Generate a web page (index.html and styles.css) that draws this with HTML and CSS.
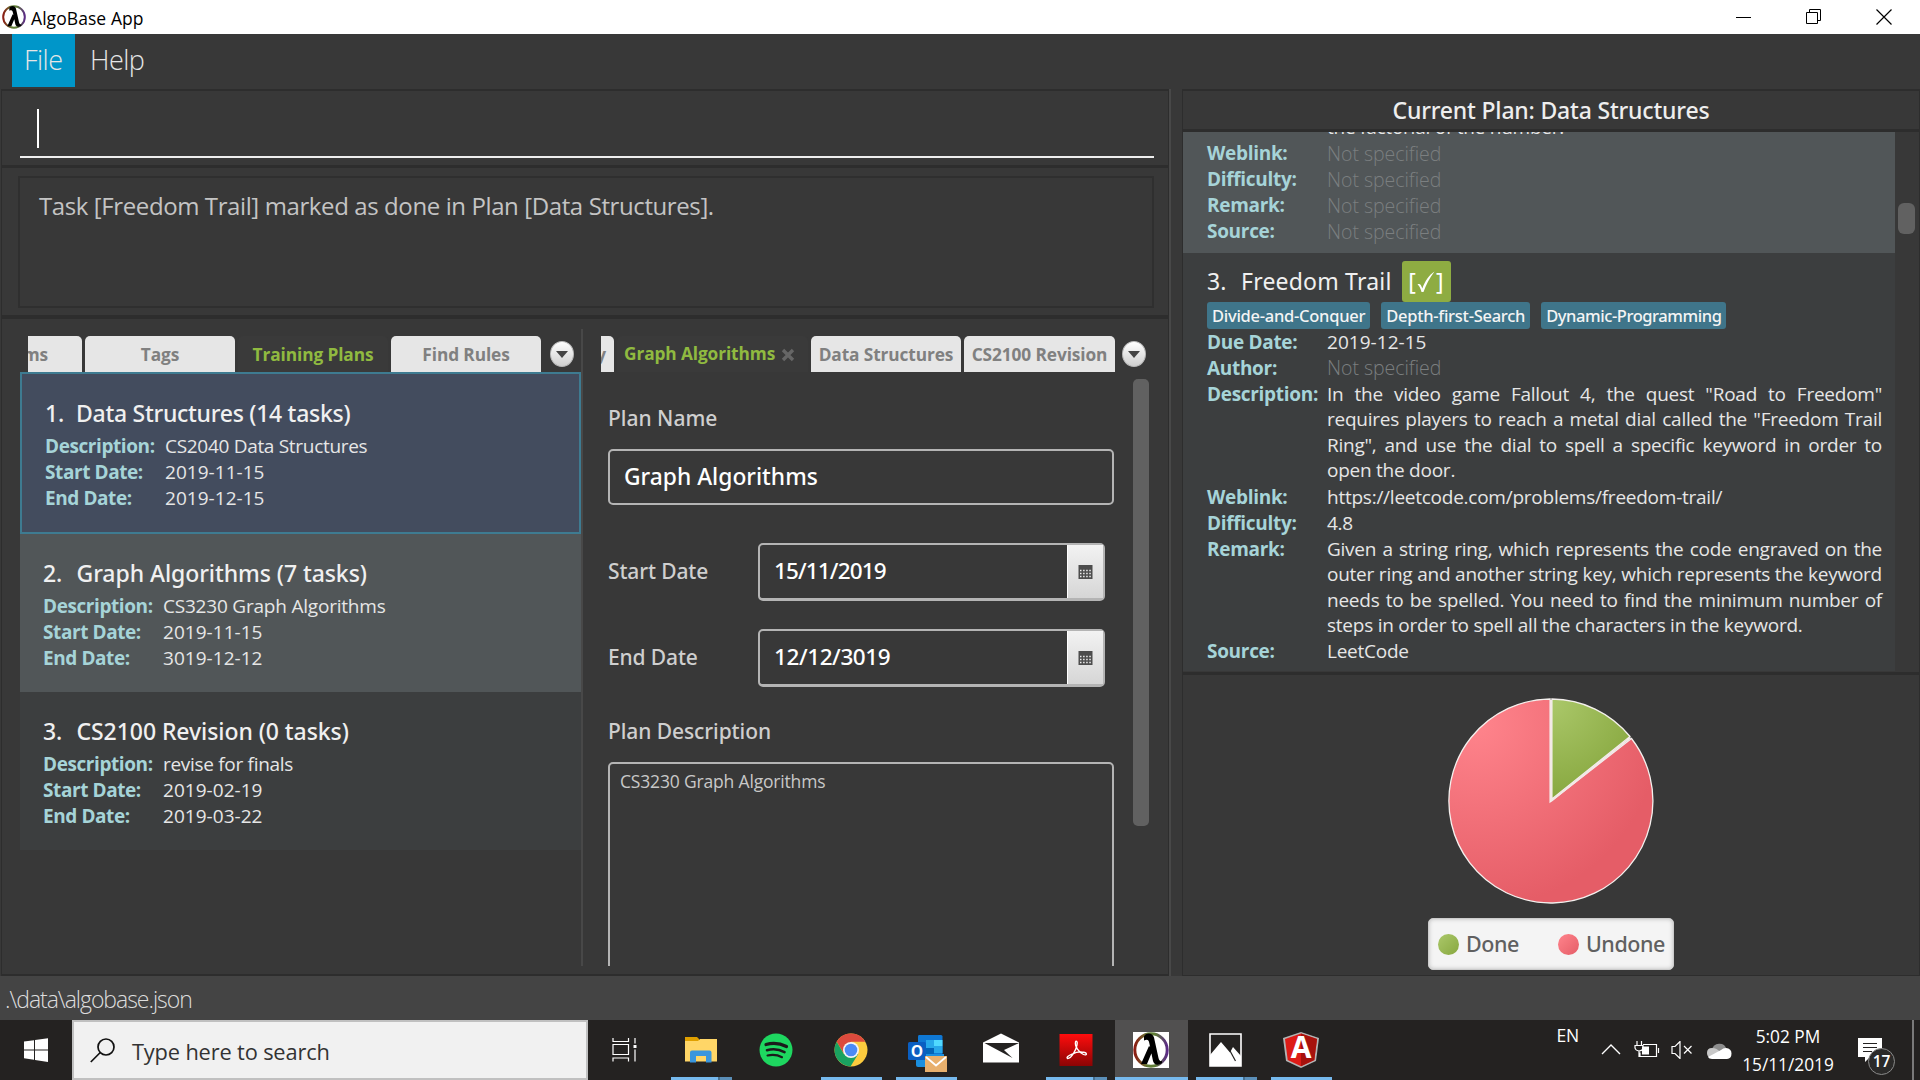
FILE: index.html
```
<!DOCTYPE html>
<html lang="en">
<head>
<meta charset="utf-8">
<title>AlgoBase App</title>
<link rel="stylesheet" href="styles.css">
</head>
<body>
<svg width="0" height="0" class="defs">
  <defs>
    <linearGradient id="ring" x1="0" y1="0" x2="1" y2="0">
      <stop offset="0" stop-color="#8c1c13"/><stop offset=".4" stop-color="#5f7d35"/>
      <stop offset=".62" stop-color="#5f7d35"/><stop offset="1" stop-color="#5b2a86"/>
    </linearGradient>
    <symbol id="lambda" viewBox="0 0 36 36">
      <circle cx="18" cy="18" r="16.200" fill="none" stroke="url(#ring)" stroke-width="3"/>
      <path d="M11 4.500c1.500-4 8.500-4.400 10 1l4.500 20.500c.8 2.600 1.500 3.500 3.500 3v2c-4 2.800-8 1.900-9-2L16.500 12c-.8-3.800-1.500-5-5.500-3.500zM16 14l4 3.500L14 32H8z" fill="#000"/>
    </symbol>
    <symbol id="calendar" viewBox="0 0 15 16">
      <path d="M.5 1h14v14H.5z" fill="#4d4d4d"/>
      <path d="M2 6.500h11M2 9.500h11M2 12.500h11" stroke="#eee" stroke-width="1.500" stroke-dasharray="1.500 1.600"/>
    </symbol>
  </defs>
</svg>

<header class="titlebar">
  <svg class="app-icon" width="24" height="24"><use href="#lambda"/></svg>
  <span class="app-name">AlgoBase App</span>
  <div class="window-buttons">
    <svg width="16" height="16"><path d="M0 8.500h15" stroke="#000"/></svg>
    <svg width="16" height="16" fill="none" stroke="#000"><path d="M.5 3.500h11v11H.5zM3.500 3.500v-3h11v11h-3"/></svg>
    <svg width="16" height="16"><path d="M.5 .5l15 15M15.500 .5l-15 15" stroke="#000" stroke-width="1.200"/></svg>
  </div>
</header>

<nav class="menubar">
  <span class="menu active">File</span>
  <span class="menu">Help</span>
</nav>

<main class="workspace">
  <section class="left-side">
    <div class="pane command-pane"><div class="command"><i class="caret"></i></div></div>
    <div class="pane result-pane"><div class="result">Task [Freedom Trail] marked as done in Plan [Data Structures].</div></div>
    <div class="pane split">
      <div class="list-side">
        <div class="tabs">
          <span class="tab clipped"><b>ms</b></span>
          <span class="tab">Tags</span>
          <span class="tab current">Training Plans</span>
          <span class="tab">Find Rules</span>
          <span class="more"><i></i></span>
        </div>
        <article class="plan selected">
          <h2><span>1.</span>Data Structures (14 tasks)</h2>
          <dl><dt>Description:</dt><dd>CS2040 Data Structures</dd><dt>Start Date:</dt><dd class="date">2019-11-15</dd><dt>End Date:</dt><dd class="date">2019-12-15</dd></dl>
        </article>
        <article class="plan even">
          <h2><span>2.</span>Graph Algorithms (7 tasks)</h2>
          <dl><dt>Description:</dt><dd class="wide">CS3230 Graph Algorithms</dd><dt>Start Date:</dt><dd class="date">2019-11-15</dd><dt>End Date:</dt><dd class="date">3019-12-12</dd></dl>
        </article>
        <article class="plan">
          <h2><span>3.</span>CS2100 Revision (0 tasks)</h2>
          <dl><dt>Description:</dt><dd>revise for finals</dd><dt>Start Date:</dt><dd class="date">2019-02-19</dd><dt>End Date:</dt><dd class="date">2019-03-22</dd></dl>
        </article>
      </div>
      <div class="detail-side">
        <div class="tabs">
          <span class="tab clipped narrow"><b>y</b></span>
          <span class="tab current closable">Graph Algorithms<svg width="14" height="14"><path d="M2 2l10 10M12 2L2 12" stroke="#666" stroke-width="3.400"/></svg></span>
          <span class="tab">Data Structures</span>
          <span class="tab last">CS2100 Revision</span>
          <span class="more"><i></i></span>
        </div>
        <div class="form-scroll">
          <form class="form">
            <label class="name-label">Plan Name</label>
            <div class="field">Graph Algorithms</div>
            <div class="date-row start"><label>Start Date</label><div class="picker"><span>15/11/2019</span><i><svg width="15" height="16"><use href="#calendar"/></svg></i></div></div>
            <div class="date-row"><label>End Date</label><div class="picker"><span class="end">12/12/3019</span><i><svg width="15" height="16"><use href="#calendar"/></svg></i></div></div>
            <label class="desc-label">Plan Description</label>
            <div class="area">CS3230 Graph Algorithms</div>
          </form>
          <i class="thumb"></i>
        </div>
      </div>
    </div>
  </section>

  <section class="right-side">
    <h1 class="pane plan-header">Current Plan: Data Structures</h1>
    <div class="pane task-pane">
      <div class="tasks">
        <article class="task previous">
          <dl><dt></dt><dd>the factorial of the number.</dd><dt>Weblink:</dt><dd class="none">Not specified</dd><dt>Difficulty:</dt><dd class="none">Not specified</dd><dt>Remark:</dt><dd class="none">Not specified</dd><dt>Source:</dt><dd class="none">Not specified</dd></dl>
        </article>
        <article class="task">
          <h2><span>3.</span>Freedom Trail<em>[<svg width="20" height="24"><path d="M1.500 14.500C4 13 5.200 15 6.300 18.500 9 11 13 5 18.500 1.500 13.500 8 10 15 7.500 22H5.500C4.500 18.500 3.500 16 1.500 14.500z" fill="#fff"/></svg>]</em></h2>
          <div class="tags"><span>Divide-and-Conquer</span><span>Depth-first-Search</span><span>Dynamic-Programming</span></div>
          <dl><dt>Due Date:</dt><dd class="date">2019-12-15</dd><dt>Author:</dt><dd class="none">Not specified</dd><dt>Description:</dt><dd class="para"><span>In the video game Fallout 4, the quest "Road to Freedom"</span><span>requires players to reach a metal dial called the "Freedom Trail</span><span>Ring", and use the dial to spell a specific keyword in order to</span><span>open the door.</span></dd><dt>Weblink:</dt><dd>https://leetcode.com/problems/freedom-trail/</dd><dt>Difficulty:</dt><dd>4.8</dd><dt>Remark:</dt><dd class="para"><span>Given a string ring, which represents the code engraved on the</span><span>outer ring and another string key, which represents the keyword</span><span>needs to be spelled. You need to find the minimum number of</span><span>steps in order to spell all the characters in the keyword.</span></dd><dt>Source:</dt><dd>LeetCode</dd></dl>
        </article>
      </div>
      <div class="track"><i></i></div>
    </div>
    <div class="pane chart-pane">
      <svg width="208" height="208" viewBox="-104 -104 208 208">
        <defs>
          <radialGradient id="red" gradientUnits="userSpaceOnUse" cx="-75" cy="-78" r="185"><stop offset="0" stop-color="#ff848c"/><stop offset="1" stop-color="#e55d67"/></radialGradient>
          <radialGradient id="green" gradientUnits="userSpaceOnUse" cx="0" cy="-100" r="98"><stop offset="0" stop-color="#abc86a"/><stop offset="1" stop-color="#88a840"/></radialGradient>
        </defs>
        <g stroke="#f4f0ee" stroke-width="1.300">
          <path d="M-.9 1V-102A102 102 0 1 0 80.500 -62.500z" fill="url(#red)"/>
          <path d="M.9 -2V-102A102 102 0 0 1 79 -64.500z" fill="url(#green)"/>
        </g>
        <path d="M0 0V-101M0 0L79.500 -63.500" stroke="#f3e9e7" stroke-width="2"/>
      </svg>
      <div class="legend"><span><i class="done"></i>Done</span><span><i class="undone"></i>Undone</span></div>
    </div>
  </section>
</main>

<div class="statusbar">.\data\algobase.json</div>

<footer class="taskbar">
  <div class="start-button"><svg width="24" height="24"><path d="M0 3.600l10-1.400v9.200H0zM11 2l13-1.800v11.200H11zM0 12.500h10v9.200L0 20.300zM11 12.500h13V24l-13-1.900z" fill="#fff"/></svg></div>
  <div class="search"><svg width="25" height="25" fill="none" stroke="#111" stroke-width="1.700"><circle cx="16" cy="9" r="8"/><path d="M10.300 14.500L.8 24"/></svg><span>Type here to search</span></div>
  <div class="apps">
    <div class="app view"><svg width="26" height="24" fill="none" stroke="#fff" stroke-width="1.200"><path d="M1 0v3.500h15.500V0M1 6.500h15.500v10H1zM1 23.500V20h15.500v3.500M23 0v5.500M23 11.500v12"/><path d="M21.500 7h3v3h-3z" fill="#fff" stroke="none"/></svg></div>
    <div class="app running multi"><svg width="32" height="32"><path d="M0 3h12l2 2v6H0z" fill="#e0a000"/><path d="M0 7h13l2-2h17v22.500H0z" fill="#ffd667"/><path d="M5 28.500V18.500q0-2 2-2h17.500q2 0 2 2v10h-5.500v-6.500h-10v6.500z" fill="#3a96dd"/></svg></div>
    <div class="app"><svg width="34" height="34"><circle cx="17" cy="17" r="16.500" fill="#1ed760"/><g fill="none" stroke="#1b1b1b" stroke-linecap="round"><path d="M7 11.500c7-2 14-1.300 20.500 2" stroke-width="3.200"/><path d="M8 17.200c6-1.600 12-1 17.500 1.900" stroke-width="2.600"/><path d="M8.500 22.500c5-1.200 10-.7 14.500 1.700" stroke-width="2.100"/></g></svg></div>
    <div class="app running"><svg width="34" height="34"><circle cx="17" cy="17" r="16.500" fill="#fccb3e"/><path d="M2.700 8.750A16.500 16.500 0 0 1 31.300 8.750H17L9.500 20z" fill="#dc4a3d"/><path d="M2.700 8.750A16.500 16.500 0 0 0 16.500 33.500L24.200 21 9.900 21.100z" fill="#1aa260"/><circle cx="17" cy="17" r="8" fill="#f4f4f4"/><circle cx="17" cy="17" r="6.300" fill="#4b8af5"/></svg></div>
    <div class="app running outlook"><svg width="40" height="38"><path d="M11 1h22q1.500 0 1.500 1.500V25H10V2.500Q10 1 11 1z" fill="#0f78d4"/><path d="M18 6h8v8h-8z" fill="#28a8ea"/><path d="M26 6h8.500v6H26z" fill="#50d9ff"/><path d="M18 14h8v6h-8z" fill="#0364b8"/><path d="M26 12h8.500v7H26z" fill="#28a8ea"/><path d="M8 20h28v10q0 3-3 3H10q-2 0-2-2z" fill="#1a8fdf"/><rect y="8" width="18" height="18" rx="1.500" fill="#0a5fc2"/><text x="9" y="22.500" text-anchor="middle" class="logo-letter" font-size="15.500" fill="#fff">O</text><path d="M17 22h22v16H17z" fill="#e8b06d"/><path d="M18 23l10 8.500L38 23" fill="none" stroke="#fff" stroke-width="1.800"/></svg></div>
    <div class="app mail"><svg width="36" height="30"><path d="M0 9.500L18 .5l18 9v20H0z" fill="#fff"/><path d="M1.500 10H36L21 17l8.500 8z" fill="#242221"/></svg></div>
    <div class="app running multi"><svg width="34" height="34"><defs><linearGradient id="pdf" x2="0" y2="1"><stop stop-color="#ff0d0d"/><stop offset="1" stop-color="#8a0404"/></linearGradient></defs><path d="M.5 1h33v32H.5z" fill="url(#pdf)"/><path d="M8.500 25.500c-3-2 9-7 14-6.500 7 .5 5.500 4 2 2.500-4.500-2-9-8-8-12.500.5-2 2.500-.5 1.500 3-1 5-5.500 13.500-9.500 13.500z" fill="none" stroke="#fff" stroke-width="1.300"/></svg></div>
    <div class="app running focused"><svg width="36" height="36"><path d="M0 0h36v36H0z" fill="#fff"/><use href="#lambda"/></svg></div>
    <div class="app running multi"><svg width="33" height="34"><path d="M1 1h31v32H1z" fill="none" stroke="#fff" stroke-width="1.600"/><path d="M1 22L12 9l9 10.500 3-5.500 8 9v10H1z" fill="#fff"/><path d="M20 16l6.500 12" stroke="#242221" stroke-width="1.200"/></svg></div>
    <div class="app running"><svg width="36" height="36"><path d="M18 0l18 6-3 23-15 7-15-7L0 6z" fill="#b3b3b3"/><path d="M18 1.500L34 7l-2.700 21L18 34.300 4.700 28 2 7z" fill="#dd1b16"/><path d="M18 1.500L34 7l-2.700 21L18 34.300z" fill="#a6120d"/><text x="18" y="26" text-anchor="middle" class="logo-letter" font-size="30" fill="#fff">A</text></svg></div>
  </div>
  <div class="tray">
    <span class="lang">EN</span>
    <svg class="chevron" width="20" height="12"><path d="M1 11l9-9 9 9" fill="none" stroke="#fff" stroke-width="1.400"/></svg>
    <svg class="battery" width="26" height="18" fill="none" stroke="#fff" stroke-width="1.200"><path d="M9 3.500h13.500v12H6v-4M24.500 7v5M3 0v4M7.500 0v4M1 4.500h8v2.500q0 2.500-4 3-3.500-.5-4-3zM5 10v6"/><path d="M8 5.500h7v8H8z" fill="#fff" stroke="none"/></svg>
    <svg class="volume" width="22" height="18" fill="none" stroke="#fff" stroke-width="1.200"><path d="M1 5.500h3l5-5v17l-5-5H1zM13 5l7.500 7.500M20.500 5L13 12.500"/></svg>
    <svg class="cloud" width="26" height="18"><path d="M5 8a7.500 7.500 0 0 1 14.500-1l-6 6z" fill="#8d8d8d"/><path d="M5 6q5 0 8 4l-8 6Q0 16 0 11t5-5z" fill="#c8c8c8"/><path d="M19 6q5.500.5 5.500 5.500t-4.500 5.500H5q-3 0-4-2l13-7q2-2 5-2z" fill="#fff"/></svg>
    <div class="clock"><span>5:02 PM</span><span>15/11/2019</span></div>
    <div class="notify"><svg width="24" height="24"><path d="M0 0h24v19H12l-5 5v-5H0z" fill="#fff"/><path d="M5 5.500h14M5 9.500h14M5 13.500h9" stroke="#242221" stroke-width="1.200"/></svg><b>17</b></div>
    <i class="show-desktop"></i>
  </div>
</footer>
</body>
</html>
```
FILE: styles.css
```
* { box-sizing: border-box; }
body {
  margin: 0; width: 1920px; height: 1080px; overflow: hidden;
  display: flex; flex-direction: column;
  background: #383838; color: #e6e6e6;
  font-family: "Open Sans", "Noto Sans", sans-serif;
}
.defs { position: absolute; }
svg { display: block; flex: none; }
h1, h2, dl, dd { margin: 0; }
i { display: block; }

/* window chrome */
.titlebar { height: 34px; display: flex; align-items: center; background: #fff; color: #000; padding-left: 2px; }
.app-name { margin-left: 5px; font-size: 17.500px; line-height: 24px; padding-top: 1px; letter-spacing: .004em; }
.window-buttons { margin: 0 28px 0 auto; display: flex; gap: 54px; }
.menubar { height: 55px; display: flex; padding-left: 12px; }
.menu { height: 53px; line-height: 52px; padding: 0 15px; font-size: 27px; font-weight: 300; letter-spacing: -.02em; }
.menu.active { width: 63px; padding: 0 12px; background: #0096c9; }

/* split workspace */
.workspace { height: 887px; display: flex; padding-left: 1px; }
.left-side { width: 1170px; display: flex; flex-direction: column; border-right: 2px solid #484848; }
.right-side { width: 738px; margin-left: 11px; display: flex; flex-direction: column; }
.pane { border: 2px solid #2d2d2d; border-left-width: 1px; border-right-width: 1px; }
.command-pane { height: 77px; border-bottom-width: 1px; padding: 0 14px 0 18px; }
.command { height: 67px; border-bottom: 2px solid #eee; padding: 18px 0 0 17px; }
.caret { width: 1.500px; height: 39px; background: #fff; }
.result-pane { height: 151px; padding: 8px 14px 6px 16px; }
.result { height: 132px; border: 2px solid #2f2f2f; padding: 10px 19px; line-height: 36px; font-size: 24px; letter-spacing: -.0165em; color: #c4c4c4; }
.split { flex: 1; display: flex; padding: 10px 0 8px 18px; border-bottom-width: 2px; }

/* tabs */
.list-side { width: 563px; border-right: 2px solid #484848; }
.tabs { height: 43px; padding: 7px 0 0 8px; display: flex; gap: 3px; }
.tab {
  width: 150px; height: 36px; border-radius: 5px 5px 0 0; background: #e6e6e6; color: #808080;
  font-size: 17.300px; font-weight: 700; line-height: 38px; text-align: center; white-space: nowrap; letter-spacing: -.006em;
}
.tab.current { background: #3a3a3a; color: #90ba40; }
.tab.clipped { width: 54px; border-radius: 0 5px 0 0; overflow: hidden; display: flex; justify-content: flex-end; padding-right: 34px; }
.tab.clipped b { font-weight: 700; }
.more {
  width: 24px; height: 26px; margin: 5px 0 0 6px; border-radius: 50%;
  background: linear-gradient(#fff, #cfcfcf); border: 1px solid #bbb; display: flex; align-items: center; justify-content: center;
}
.more i { border: 6px solid transparent; border-top: 7px solid #444; border-bottom: 0; }

/* plan list */
.plan { height: 158px; padding: 23px 0 0 23px; background: #3c3e3f; }
.plan.even { background: #515658; }
.plan.selected { height: 162px; border: 2px solid #3e7b91; background: #434c5e; }
.plan h2 { line-height: 32px; margin-bottom: 4px; display: flex; font: 500 23px/32px "Noto Sans", sans-serif; letter-spacing: -.003em; color: #f0f0f0; }
.plan h2 span { width: 33.500px; }
.plan.selected h2 { letter-spacing: -.012em; }
.plan.selected h2 span { width: 31px; }
dl { display: grid; grid-template-columns: 120px 1fr; grid-auto-rows: minmax(26px, auto); line-height: 26px; font-size: 19px; letter-spacing: -.016em; }
dt { font-weight: 700; color: #a6d4d8; letter-spacing: -.022em; white-space: nowrap; }
.date { letter-spacing: .002em; }
.wide { letter-spacing: -.011em; }
.none { font-weight: 300; color: #7b7f80; font-size: 19.500px; letter-spacing: -.002em; }

/* plan form */
.detail-side { flex: 1; padding-left: 11px; }
.detail-side .tabs { padding-left: 7px; }
.tab.narrow { width: 13px; padding-right: 8px; }
.tab.closable { width: 191px; display: flex; align-items: center; gap: 6px; padding-left: 7px; }
.tab.closable svg { margin-top: 2px; }
.tab.last { width: 151px; }
.detail-side .more { margin-left: 4px; }
.form-scroll { height: 594px; display: flex; overflow: hidden; font-family: "Noto Sans", sans-serif; }
.form { width: 506px; margin-left: 14px; font-weight: 500; color: #cfcfcf; }
.form label { display: block; font-size: 21px; line-height: 30px; }
.name-label { margin-top: 31px; }
.field { margin-top: 16px; height: 56px; border: 2px solid #b4b4b4; border-radius: 5px; padding-left: 14px; line-height: 52px; font-size: 22.800px; color: #fff; }
.date-row { height: 86px; display: flex; align-items: flex-start; }
.date-row.start { margin-top: 38px; }
.date-row label { width: 150px; line-height: 57px; letter-spacing: -.006em; }
.picker { width: 347px; height: 58px; border: 2px solid #b4b4b4; border-bottom-width: 3px; border-radius: 5px; display: flex; }
.picker span { flex: 1; padding-left: 14px; line-height: 51px; font-size: 22.500px; letter-spacing: -.038em; color: #fff; }
.picker .end { letter-spacing: -.018em; }
.picker i { width: 36px; background: linear-gradient(#f2f2f2, #d6d6d6); border-left: 1px solid #fff; display: flex; align-items: center; justify-content: center; }
.form .desc-label { margin-top: 1px; letter-spacing: -.004em; }
.area { margin-top: 16px; height: 300px; border: 2px solid #b4b4b4; border-radius: 5px; padding: 3px 10px; font: 400 17.500px/28px "Open Sans", sans-serif; letter-spacing: -.01em; color: #c8c8c8; }
.thumb { width: 16px; height: 447px; margin: 7px 0 0 19px; border-radius: 5px; background: #616161; }

/* current plan */
.plan-header { height: 42px; text-align: center; font: 500 23px/38px "Noto Sans", sans-serif; letter-spacing: -.008em; color: #eee; }
.task-pane { height: 542px; border-top-width: 1px; border-bottom-width: 1px; display: flex; }
.tasks { width: 712px; height: 539px; overflow: hidden; }
.task { height: 418px; padding: 8px 13px 0 24px; background: #3c3e3f; }
.task.previous { height: 121px; padding-top: 0; padding-bottom: 8px; background: #515658; display: flex; flex-direction: column; justify-content: flex-end; overflow: hidden; }
.task.previous dl { line-height: 25px; }
.task h2 { height: 41px; display: flex; align-items: center; font: 400 23px/41px "Noto Sans", sans-serif; letter-spacing: .009em; color: #f0f0f0; }
.task h2 > span { width: 34px; }
.task h2 em { margin-left: 10px; width: 49px; height: 41px; border-radius: 3px; background: #8eac42; display: flex; align-items: center; justify-content: center; font-style: normal; color: #fff; }
.tags { height: 27px; display: flex; gap: 11px; }
.tags span { padding: 0 5px; border-radius: 3px; background: #3f758a; font: 500 16.500px/27px "Noto Sans", sans-serif; letter-spacing: -.016em; color: #f4f4f4; }
.tags span:last-child { letter-spacing: -.026em; }
.task dl { letter-spacing: -.013em; }
.task dt { letter-spacing: -.016em; }
.para { padding-top: 1px; line-height: 25.420px; }
.para span { display: block; text-align-last: justify; white-space: nowrap; }
.para span:last-child { text-align-last: left; }
.task .date { letter-spacing: .002em; }
.track { flex: 1; padding: 71px 0 0 3px; }
.track i { width: 17px; height: 31px; border-radius: 6px; background: #616161; }
.chart-pane { flex: 1; border-top-width: 2px; border-bottom-width: 1px; display: flex; flex-direction: column; align-items: center; padding-top: 22px; }
.legend { width: 246px; height: 52px; margin-top: 13px; border-radius: 5px; background: #f4f4f4; border: 1px solid #ccc; box-shadow: inset 0 0 4px #bbb; display: flex; justify-content: space-between; padding: 0 8px 0 9px; font: 500 21.500px/50px "Noto Sans", sans-serif; letter-spacing: -.02em; color: #606060; }
.legend span { display: flex; align-items: center; gap: 7px; }
.legend i { width: 21px; height: 21px; border-radius: 50%; }
.done { background: linear-gradient(135deg, #abc86a, #88a840); }
.undone { background: linear-gradient(135deg, #ff848c, #e55d67); }

.statusbar { height: 44px; background: #444; padding-left: 5px; line-height: 46px; font-size: 23px; font-weight: 300; letter-spacing: -.045em; color: #ddd; }

/* desktop taskbar */
.taskbar { height: 60px; background: #242221; display: flex; color: #fff; }
.start-button { width: 72px; padding: 18px 0 0 24px; }
.search { width: 516px; border: 2px solid #c0c0c0; background: #f1f1f1; display: flex; align-items: center; padding-left: 16px; gap: 17px; font-size: 21.800px; letter-spacing: -.007em; color: #333; }
.search span { padding-top: 2px; }
.apps { display: flex; padding-left: 1px; }
.app { width: 75px; height: 60px; padding-right: 2px; display: flex; align-items: center; justify-content: center; }
.app.view { padding-right: 4px; }
.app.mail { padding-bottom: 4px; }
.app.outlook { padding: 5px 0 0 2px; }
.app.running { background: linear-gradient(#76b9ed, #76b9ed) 7px 57px / 61px 3px no-repeat; }
.app.multi { background: linear-gradient(90deg, #76b9ed 47px, #47708f 47px, #47708f 49px, #5b8fb8 49px) 7px 57px / 61px 3px no-repeat; }
.app.focused { width: 73px; padding-right: 1px; margin: 0 1px; background: linear-gradient(#76b9ed, #76b9ed) 0 57px / 73px 3px no-repeat, #515050; }
.logo-letter { font-family: "Open Sans", sans-serif; font-weight: 700; }
.tray { margin-left: auto; display: flex; align-items: flex-start; }
.lang { margin: 2px 22px 0 0; font-size: 17.500px; line-height: 26px; letter-spacing: -.01em; }
.chevron { margin: 23px 13px 0 0; }
.battery { margin: 21px 11px 0 0; }
.volume { margin: 21px 14px 0 0; }
.cloud { margin: 22px 7px 0 0; }
.clock { width: 96px; padding-top: 3px; text-align: center; font-size: 17.300px; line-height: 28px; }
.clock span { display: block; }
.notify { position: relative; width: 54px; padding: 18px 0 0 22px; }
.notify b { position: absolute; left: 32px; top: 28px; width: 27px; height: 27px; border: 1px solid #8a8a8a; border-radius: 50%; background: #2b2a29; text-align: center; font-size: 15.500px; font-weight: 600; line-height: 25px; }
.show-desktop { width: 2px; height: 60px; margin: 0 6px 0 22px; background: #7a7a7a; }
```
